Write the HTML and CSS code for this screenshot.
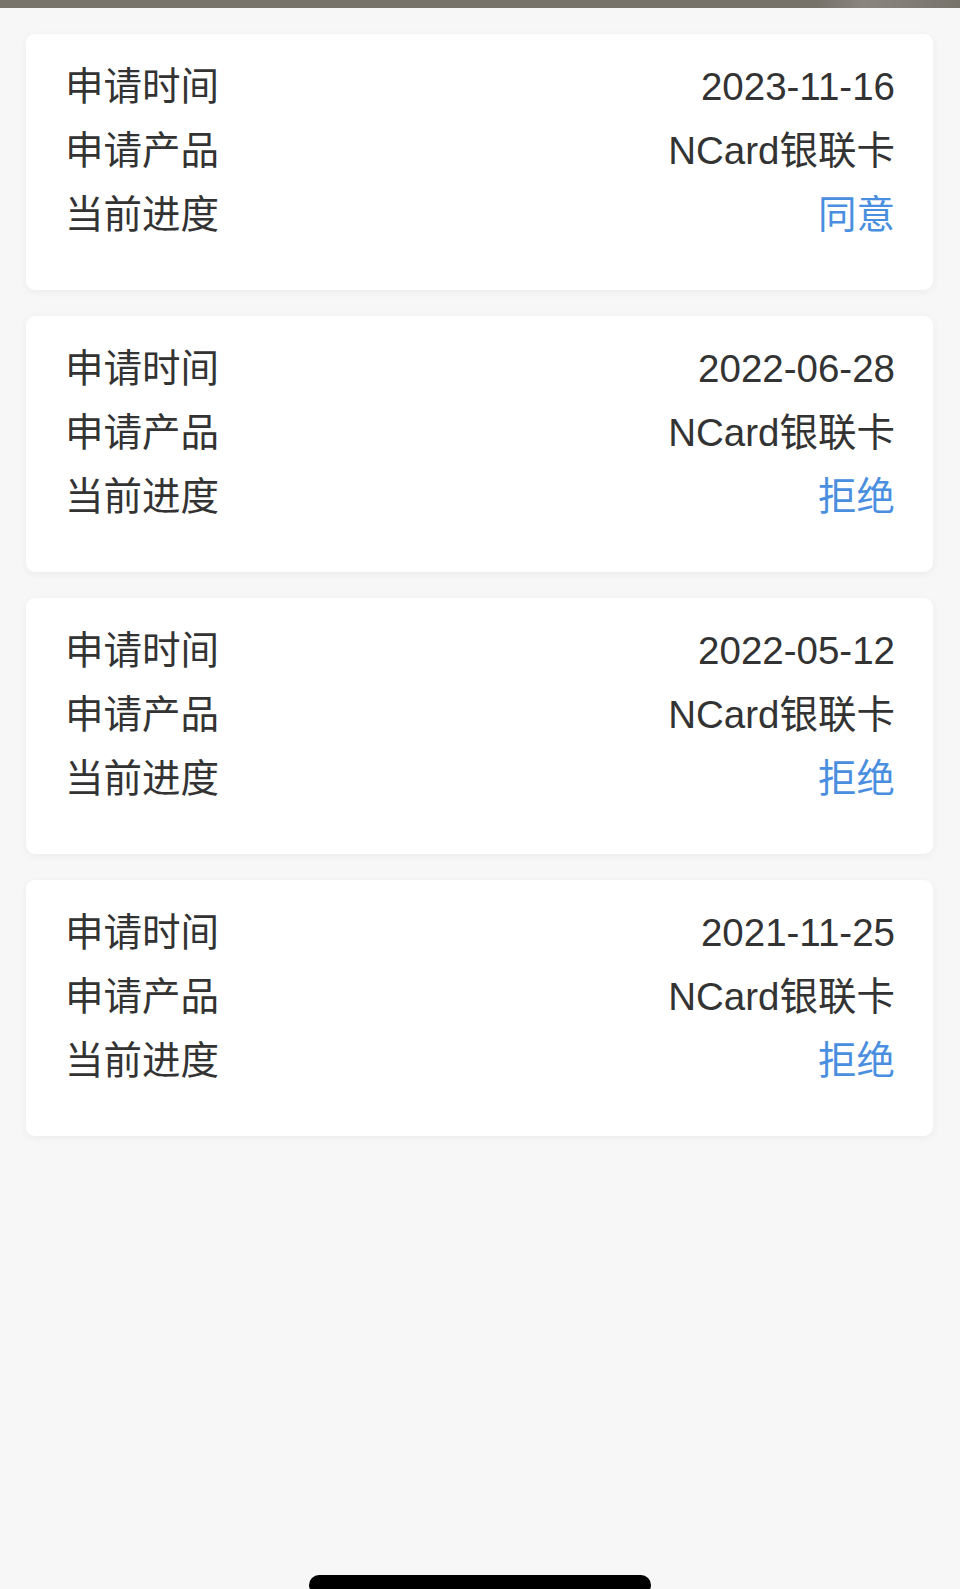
FILE: index.html
```html
<!DOCTYPE html>
<html lang="zh-CN">
<head>
  <meta charset="UTF-8" />
  <meta name="viewport" content="width=device-width, initial-scale=1.0" />
  <title>申请记录</title>
  <link rel="stylesheet" href="styles.css">
</head>
<body>
  <div class="top-strip"></div>

  <div class="list">
    <div class="card">
      <div class="row"><span class="label">申请时间</span><span class="value">2023-11-16</span></div>
      <div class="row"><span class="label">申请产品</span><span class="value">NCard银联卡</span></div>
      <div class="row"><span class="label">当前进度</span><span class="value status">同意</span></div>
    </div>

    <div class="card">
      <div class="row"><span class="label">申请时间</span><span class="value">2022-06-28</span></div>
      <div class="row"><span class="label">申请产品</span><span class="value">NCard银联卡</span></div>
      <div class="row"><span class="label">当前进度</span><span class="value status">拒绝</span></div>
    </div>

    <div class="card">
      <div class="row"><span class="label">申请时间</span><span class="value">2022-05-12</span></div>
      <div class="row"><span class="label">申请产品</span><span class="value">NCard银联卡</span></div>
      <div class="row"><span class="label">当前进度</span><span class="value status">拒绝</span></div>
    </div>

    <div class="card">
      <div class="row"><span class="label">申请时间</span><span class="value">2021-11-25</span></div>
      <div class="row"><span class="label">申请产品</span><span class="value">NCard银联卡</span></div>
      <div class="row"><span class="label">当前进度</span><span class="value status">拒绝</span></div>
    </div>
  </div>

  <div class="home-indicator"></div>
</body>
</html>
```

FILE: styles.css
```css
body {
  font-family: "Liberation Sans", "Noto Sans CJK SC", sans-serif;
  background-color: #f7f7f7;
  color: #333;
  margin: 0;
  padding: 0;
  min-height: 1589px;
  position: relative;
  overflow: hidden;
}

.top-strip {
  height: 8px;
  background: linear-gradient(90deg, #78746c 0%, #76726a 85%, #8a867f 90%, #77736b 100%);
}

.list {
  display: flex;
  flex-direction: column;
  gap: 26px;
  padding: 26px 27px 0 26px;
}

.card {
  background-color: #fff;
  border-radius: 9px;
  padding: 21px 38px 43px 39px;
  box-shadow: 0 2px 8px rgba(0, 0, 0, 0.05);
}

.row {
  display: flex;
  justify-content: space-between;
  align-items: center;
  height: 64px;
  font-size: 38.5px;
  line-height: 64px;
}

.status {
  color: #4a8fdf;
}

.home-indicator {
  position: absolute;
  left: 309px;
  bottom: -6px;
  width: 342px;
  height: 20px;
  border-radius: 10px;
  background-color: #000;
}
```
